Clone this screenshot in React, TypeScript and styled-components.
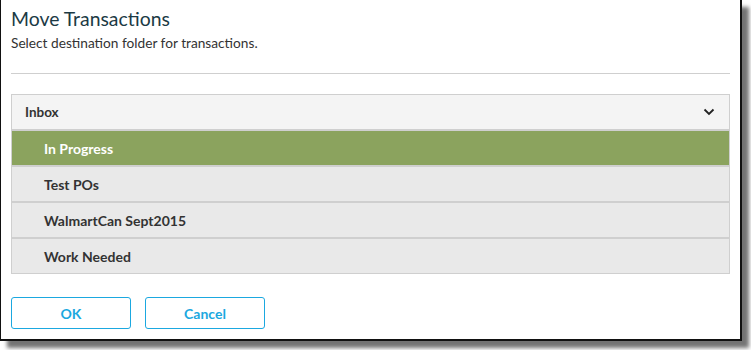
import React from 'react';
import styled, { createGlobalStyle } from 'styled-components';

const folders = ['In Progress', 'Test POs', 'WalmartCan Sept2015', 'Work Needed'];

const App: React.FC = () => {
  const selected = 'In Progress';

  return (
    <>
      <GlobalStyle />
      <Frame>
        <Dialog>
          <Title>Move Transactions</Title>
          <Subtitle>Select destination folder for transactions.</Subtitle>
          <Rule />
          <FolderList>
            <ListHeader>
              <span>Inbox</span>
              <svg width="12" height="8" viewBox="0 0 12 8">
                <path d="M1.5 1.5 L6 6 L10.5 1.5" fill="none" stroke="#222" strokeWidth="1.8" />
              </svg>
            </ListHeader>
            {folders.map((name) => (
              <FolderRow key={name} active={name === selected}>
                {name}
              </FolderRow>
            ))}
          </FolderList>
          <Actions>
            <Button>OK</Button>
            <Button>Cancel</Button>
          </Actions>
        </Dialog>
      </Frame>
    </>
  );
};

export default App;

const GlobalStyle = createGlobalStyle`
  body {
    margin: 0;
    background: #fff;
    font-family: Lato, "Noto Sans", sans-serif;
  }
`;
const Frame = styled.div`
  width: 751px;
  height: 350px;
  overflow: hidden;
`;
const Dialog = styled.div`
  box-sizing: border-box;
  width: 742px;
  height: 341px;
  padding: 0 10px;
  background: #fff;
  border-left: 1px solid #111;
  border-right: 2px solid #111;
  border-bottom: 2px solid #111;
  box-shadow: 7px 7px 4px rgba(0, 0, 0, 0.55);
`;
const Title = styled.h1`
  margin: 0;
  padding-top: 7px;
  font-size: 19.4px;
  line-height: 24px;
  font-weight: 400;
  color: #1c3a45;
`;
const Subtitle = styled.p`
  margin: 3px 0 0;
  font-size: 13.7px;
  line-height: 18px;
  color: #333;
`;
const Rule = styled.hr`
  margin: 21px 0 0;
  border: 0;
  border-top: 1px solid #cfcfcf;
`;
const FolderList = styled.div`
  margin-top: 20px;
  border: 1px solid #cfcfcf;
  border-bottom: 0;
  background: #cfcfcf;
`;
const ListHeader = styled.div`
  display: flex;
  align-items: center;
  justify-content: space-between;
  height: 34px;
  padding: 0 14px 0 13px;
  background: #f4f4f4;
  font-size: 13.5px;
  font-weight: 700;
  color: #333;
  border-bottom: 2px solid #cfcfcf;
`;
const FolderRow = styled.div<{ active?: boolean }>`
  display: flex;
  align-items: center;
  height: 34px;
  padding-left: 32px;
  font-size: 14px;
  font-weight: 700;
  color: ${(p) => (p.active ? '#fff' : '#333')};
  background: ${(p) => (p.active ? '#8ba35e' : '#e9e9e9')};
  border-bottom: 2px solid #cfcfcf;

  &:last-child {
    border-bottom: 1px solid #cfcfcf;
  }
`;
const Actions = styled.div`
  display: flex;
  gap: 14px;
  margin-top: 23px;
`;
const Button = styled.button`
  box-sizing: border-box;
  width: 120px;
  height: 32px;
  border: 1px solid #1ba8e0;
  border-radius: 3px;
  background: #fff;
  color: #1ba8e0;
  font-family: Lato, "Noto Sans", sans-serif;
  font-size: 14px;
  font-weight: 700;
`;
